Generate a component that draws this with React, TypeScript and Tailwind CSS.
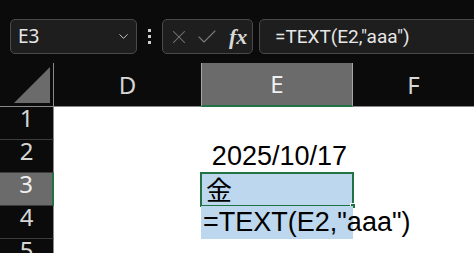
import { ChevronDown, X, Check } from "lucide-react";

const rows = [1, 2, 3, 4, 5];

export default function App() {
  return (
    <div className="w-[474px] h-[253px] overflow-hidden bg-[#0b0b0b] font-['Noto_Sans',sans-serif]">
      {/* toolbar */}
      <div className="flex h-[63px] items-start pt-[19px] pl-[10px]">
        <div className="flex h-[35px] w-[127px] shrink-0 items-center justify-between rounded-[5px] border border-[#4a4a4a] bg-[#1e1e1e] pl-[7px] pr-[5px]">
          <span className="text-[19px] leading-none text-[#e6e6e6]">E3</span>
          <ChevronDown size={15} strokeWidth={1.5} className="text-[#cfcfcf]" />
        </div>
        <div className="mx-[11px] flex h-[35px] w-[3px] shrink-0 flex-col items-center justify-center gap-[3px]">
          <span className="h-[3px] w-[3px] bg-[#cfcfcf]" />
          <span className="h-[3px] w-[3px] bg-[#cfcfcf]" />
          <span className="h-[3px] w-[3px] bg-[#cfcfcf]" />
        </div>
        <div className="flex h-[35px] w-[91px] shrink-0 items-center rounded-[5px] border border-[#4a4a4a] bg-[#1e1e1e] pl-[5px]">
          <X size={22} strokeWidth={1.1} className="text-[#7a7a7a]" />
          <Check size={24} strokeWidth={1.1} className="ml-[5px] text-[#7a7a7a]" />
          <span className="ml-[10px] font-['Liberation_Serif',serif] text-[22px] italic font-bold leading-none text-[#d8d8d8]">
            fx
          </span>
        </div>
        <div className="ml-[6px] flex h-[35px] w-[240px] shrink-0 items-center rounded-[5px] border border-[#4a4a4a] bg-[#1e1e1e] pl-[15px]">
          <span className="font-['Roboto',sans-serif] text-[19px] leading-none text-[#e6e6e6]">
            =TEXT(E2,"aaa")
          </span>
        </div>
      </div>

      {/* column headers */}
      <div className="flex h-[44px]">
        <div className="relative w-[54px] border-r border-b border-[#8a8a8a]">
          <svg className="absolute left-0 top-0" width="53" height="43" viewBox="0 0 53 43">
            <polygon points="50,4 50,40 14,40" fill="#6b6b6b" />
          </svg>
        </div>
        <div className="flex w-[147px] items-center justify-center border-b border-[#8a8a8a] text-[24px] leading-[22px] text-[#d6d6d6]">
          D
        </div>
        <div className="flex w-[152px] items-center justify-center border-x border-[#a6a6a6] border-b-2 border-b-[#217346] bg-[#6b6b6b] text-[24px] leading-[22px] text-[#f0f0f0]">
          E
        </div>
        <div className="flex flex-1 items-center justify-center border-b border-[#8a8a8a] text-[24px] leading-[22px] text-[#d6d6d6]">
          F
        </div>
      </div>

      {/* grid */}
      {rows.map((r) => (
        <div key={r} className="flex h-[33px]">
          <div
            className={
              r === 3
                ? "flex w-[54px] justify-center border-b border-[#3c3c3c] border-r-2 border-r-[#217346] bg-[#6b6b6b] text-[24px] leading-[22px] text-[#f0f0f0]"
                : "flex w-[54px] justify-center border-b border-r border-[#3c3c3c] border-r-[#8a8a8a] text-[24px] leading-[22px] text-[#d6d6d6]"
            }
          >
            {r}
          </div>
          <div className="w-[147px] bg-white" />
          <div
            className={
              r === 3 || r === 4
                ? "relative w-[152px] bg-[#bdd7ee]"
                : "relative w-[152px] bg-white"
            }
          >
            {r === 2 && (
              <div className="pt-[3px] pr-[6px] text-right font-['Liberation_Sans',sans-serif] text-[27px] leading-[27px] text-black">
                2025/10/17
              </div>
            )}
            {r === 3 && (
              <>
                <div className="pt-[2px] pl-[5px] font-['Noto_Sans_CJK_JP',sans-serif] text-[26px] leading-[27px] text-black">
                  金
                </div>
                <div className="absolute -left-px -top-px -right-px -bottom-px border-2 border-[#217346]" />
                <div className="absolute -right-[3px] -bottom-[3px] h-[6px] w-[6px] border border-white bg-[#217346]" />
              </>
            )}
            {r === 4 && (
              <div className="relative z-10 whitespace-nowrap pt-[3px] pl-[2px] font-['Liberation_Sans',sans-serif] text-[27px] leading-[27px] text-black">
                =TEXT(E2,"aaa")
              </div>
            )}
          </div>
          <div className="flex-1 bg-white" />
        </div>
      ))}
    </div>
  );
}
